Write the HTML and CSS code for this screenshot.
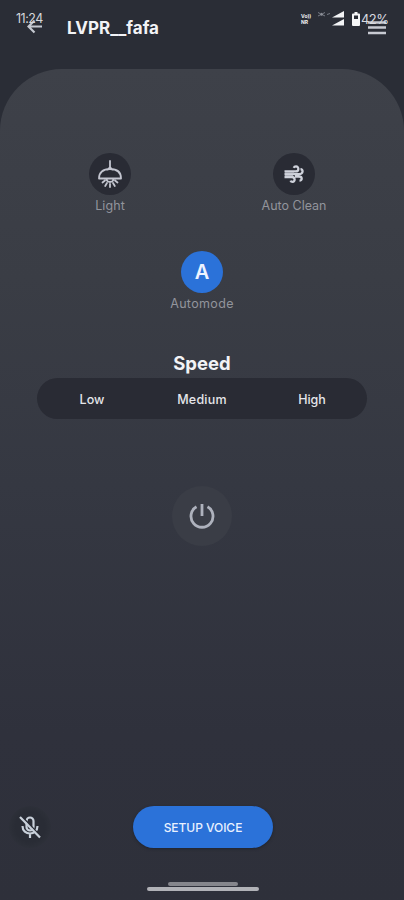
FILE: index.html
```html
<!DOCTYPE html>
<html lang="en">
<head>
<meta charset="utf-8">
<title>LVPR__fafa</title>
<link rel="stylesheet" href="styles.css">
</head>
<body>
<div class="screen">
  <div class="status">
    <span class="time">11:24</span>
    <span class="network"><span>Vo))</span><span>NR</span></span>
    <svg class="wifi" width="14" height="8" viewBox="0 0 14 8"><path d="M1 1.500l2 1M1 5l2-1M8 1.500l-2 1M8 5L6 4M10 3.500l3-1" stroke="#777b85" fill="none"/><circle cx="4.500" cy="3.200" r="1.500" fill="#8b8e97"/></svg>
    <svg class="signal" width="12" height="15" viewBox="0 0 12 15"><path d="M0 6.500L12 0V6.500ZM0 14.500L12 8V14.500Z" fill="#f2f3f5"/></svg>
    <svg class="battery" width="8" height="14" viewBox="0 0 8 14"><path d="M2.500 0h3v1.500H7q1 0 1 1V13q0 1-1 1H1q-1 0-1-1V2.500q0-1 1-1h1.500zM2 3.500V7h4V3.500z" fill="#f5f6f7" fill-rule="evenodd"/></svg>
    <span class="percent">42%</span>
  </div>
  <header class="header">
    <svg class="back" width="16" height="15" viewBox="0 0 16 15"><path d="M15 7.500H1.500M7.500 1.500l-6 6 6 6" fill="none" stroke="#c4c8d0" stroke-width="2.200"/></svg>
    <h1 class="title">LVPR__fafa</h1>
    <svg class="menu" width="18" height="14" viewBox="0 0 18 14"><path d="M0 1.500h18M0 6.500h18M0 12h18" stroke="#c8cad2" stroke-width="2.300"/></svg>
  </header>
  <main class="panel">
    <div class="row">
      <div class="control">
        <div class="disc">
          <svg width="26" height="32" viewBox="0 0 26 32" fill="none" stroke="#c3c5cf" stroke-width="1.800" stroke-linecap="round" stroke-linejoin="round"><path d="M13 3v7M11 11.500l2-2.500 2 2.500M2 20.500c0-6 4-9.500 11-9.500s11 3.500 11 9.500zM9.500 21c.5 4 6.500 4 7 0M13 26v3M10 25l-1.800 3M16 25l1.800 3M8 22.500l-2.500 2M18 22.500l2.500 2"/></svg>
        </div>
        <span class="label">Light</span>
      </div>
      <div class="control">
        <div class="disc">
          <svg width="22" height="20" viewBox="0 0 22 20" fill="none" stroke="#cfd2db" stroke-width="2.300"><path d="M1.500 7.400h11c4 0 3.500-5 .5-5q-1.800 0-2.200 1.500M1.500 10.200h14.500c4.500 0 4.500-5 1.500-5M1.500 13h7c4 0 4 4.800 1 4.800q-1.500 0-2-1.200M12 12.500h4c3.500 0 3.500 4.200.5 4.200"/><path d="M2 8.800h9M2 11.600h8" stroke="#b5b8c2" stroke-width="1"/></svg>
        </div>
        <span class="label clean">Auto Clean</span>
      </div>
    </div>
    <div class="control auto">
      <div class="disc active">A</div>
      <span class="label mode">Automode</span>
    </div>
    <h2 class="heading">Speed</h2>
    <div class="speeds"><span>Low</span><span class="medium">Medium</span><span>High</span></div>
    <div class="power">
      <svg width="28" height="28" viewBox="0 0 28 28" fill="none" stroke="#aeb2bd" stroke-width="2.800"><path d="M8.500 4.700a11 11 0 1 0 11 0M14 2v12"/></svg>
    </div>
    <footer class="footer">
      <div class="mic">
        <svg width="24" height="24" viewBox="0 0 24 24" fill="none" stroke="#c8d0da" stroke-width="2.200"><path d="M8.500 6a3.500 3.500 0 0 1 7 0v6a3.500 3.500 0 0 1-7 0zM4.500 11c0 10 15 10 15 0M12 18.500V23"/><path d="M4 1.500l19 20" stroke="#292c35" stroke-width="1.500"/><path d="M2 2l20 20.500"/></svg>
      </div>
      <div class="voice">SETUP VOICE</div>
    </footer>
  </main>
  <div class="home"><i class="pill short"></i><i class="pill"></i></div>
</div>
</body>
</html>
```
FILE: styles.css
```css
* { box-sizing: border-box; }
body { margin: 0; background: #2b2e37; font-family: Inter, "Liberation Sans", sans-serif; color: #f2f3f6; }
.screen { position: relative; width: 404px; height: 900px; overflow: hidden; background: #2a2d36; }
.status { position: absolute; inset: 0 0 auto; height: 36px; display: flex; align-items: center; padding: 1px 15px 0 16px; z-index: 1; }
.time { font-size: 12.5px; line-height: 14px; letter-spacing: -.5px; color: #d5d7dc; margin-right: auto; }
.network { display: flex; flex-direction: column; width: 13px; font-size: 5px; font-weight: 700; line-height: 6px; letter-spacing: 0; }
.wifi { margin: -7px 0 0 3px; }
.signal { margin-left: 1px; }
.battery { margin-left: 8px; }
.percent { width: 28px; margin-left: 1px; font-size: 13px; letter-spacing: -.6px; color: #d9dbe0; white-space: nowrap; }
.header { height: 69px; display: flex; align-items: flex-start; padding: 16px 18px 0 27px; }
.back { margin-top: 3px; }
.title { margin: 0 auto 0 24px; font-size: 17px; line-height: 24px; font-weight: 700; letter-spacing: 0; }
.menu { margin-top: 5px; }
.panel { height: 831px; border-radius: 62px 62px 0 0; background: linear-gradient(#3e4149 0, #3a3d45 25%, #353842 50%, #2f313c 80%, #2e303a); padding-top: 84px; display: flex; flex-direction: column; align-items: center; }
.row { width: 368px; display: flex; }
.row .control { flex: 1; }
.control { display: flex; flex-direction: column; align-items: center; }
.disc { width: 42px; height: 42px; border-radius: 50%; background: #292b34; display: flex; align-items: center; justify-content: center; }
.label { margin-top: 3px; font-size: 12.5px; line-height: 16px; letter-spacing: .1px; color: #92949c; }
.clean { letter-spacing: 0; }
.mode { letter-spacing: .35px; }
.auto { margin-top: 37px; }
.active { background: #2b72d9; color: #eef3ff; font-size: 20px; font-weight: 600; }
.heading { margin: 39px 0 0; font-size: 18.5px; line-height: 24px; font-weight: 700; letter-spacing: 0; height: 27px; }
.speeds { width: 330px; height: 41px; padding-top: 2px; border-radius: 21px; background: #292b34; display: grid; grid-template-columns: repeat(3, 110px); align-items: center; text-align: center; font-size: 12.5px; font-weight: 500; letter-spacing: 0; color: #e5e6ea; }
.medium { letter-spacing: .2px; }
.power { margin-top: 67px; width: 60px; height: 60px; border-radius: 50%; background: #3a3d46; display: flex; align-items: center; justify-content: center; }
.footer { width: 404px; margin-top: 260px; display: flex; align-items: center; padding-left: 9px; }
.mic { width: 42px; height: 42px; border-radius: 50%; background: radial-gradient(#292c35 50%, #2d3039 71%); display: flex; align-items: center; justify-content: center; }
.voice { width: 140px; height: 42px; margin-left: 82px; border-radius: 21px; background: #2b72d9; box-shadow: 0 1px 3px #20242f; display: flex; align-items: center; justify-content: center; font-size: 12px; font-weight: 500; letter-spacing: -.05px; color: #e9f1ff; }
.home { position: absolute; left: 147px; top: 882px; width: 112px; display: flex; flex-direction: column; align-items: center; }
.pill { width: 112px; height: 4px; border-radius: 2px; background: #b1b2b7; }
.short { width: 70px; height: 4px; margin-bottom: 1px; background: #85868c; }
```
